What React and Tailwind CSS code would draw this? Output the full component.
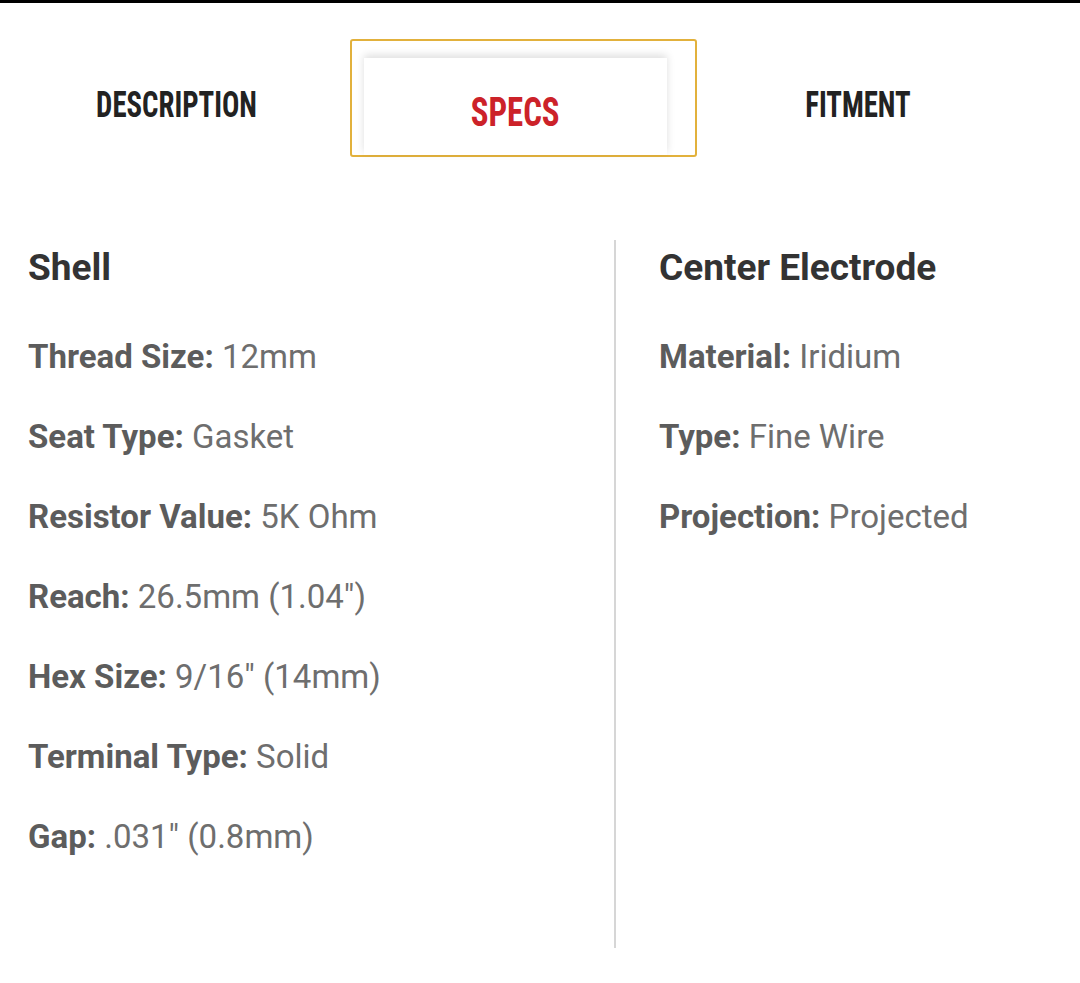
import React from 'react';

const shell = [
  ['Thread Size:', '12mm'],
  ['Seat Type:', 'Gasket'],
  ['Resistor Value:', '5K Ohm'],
  ['Reach:', '26.5mm (1.04")'],
  ['Hex Size:', '9/16" (14mm)'],
  ['Terminal Type:', 'Solid'],
  ['Gap:', '.031" (0.8mm)'],
];

const electrode = [
  ['Material:', 'Iridium'],
  ['Type:', 'Fine Wire'],
  ['Projection:', 'Projected'],
];

const tabFont = { fontFamily: '"Liberation Sans Narrow", "Roboto Condensed", "Liberation Sans", sans-serif' };

const SpecList = ({ title, rows }) => (
  <div>
    <h3 className="text-[37px] font-bold text-[#333] leading-[40px] h-[56px] pt-[8px]">{title}</h3>
    <div className="mt-[42px] flex flex-col gap-[42px]">
      {rows.map(([label, value]) => (
        <p key={label} className="text-[33px] leading-[38px] text-[#6e6e6e]">
          <span className="font-bold text-[#5c5c5c]">{label}</span> {value}
        </p>
      ))}
    </div>
  </div>
);

const App = () => {
  return (
    <div className="min-h-screen bg-white" style={{ fontFamily: 'Roboto, "Noto Sans", sans-serif' }}>
      <div className="h-[3px] bg-black" />

      {/* Tabs */}
      <div className="flex mt-[36px] h-[118px]" style={tabFont}>
        <div className="w-[350px] flex items-center justify-center pt-[13px] pl-[4px]">
          <span className="text-[36px] font-bold text-[#222] scale-x-[0.8] inline-block">DESCRIPTION</span>
        </div>
        <div className="w-[347px] border-2 border-[#e2b13c] rounded-[3px] pl-[12px] pr-[28px] pt-[17px]">
          <div className="h-full bg-white shadow-[0_-3px_8px_rgba(0,0,0,0.13)] flex items-center justify-center pt-[12px]">
            <span className="text-[40px] font-bold text-[#cc2229] scale-x-[0.82] inline-block">SPECS</span>
          </div>
        </div>
        <div className="w-[322px] flex items-center justify-center pt-[13px]">
          <span className="text-[36px] font-bold text-[#222] scale-x-[0.8] inline-block">FITMENT</span>
        </div>
      </div>

      {/* Specs */}
      <div className="flex mt-[83px]">
        <div className="w-[614px] pl-[28px]">
          <SpecList title="Shell" rows={shell} />
        </div>
        <div className="w-[2px] h-[708px] bg-[#d6d6d6]" />
        <div className="pl-[43px]">
          <SpecList title="Center Electrode" rows={electrode} />
        </div>
      </div>
    </div>
  );
};

export default App;
